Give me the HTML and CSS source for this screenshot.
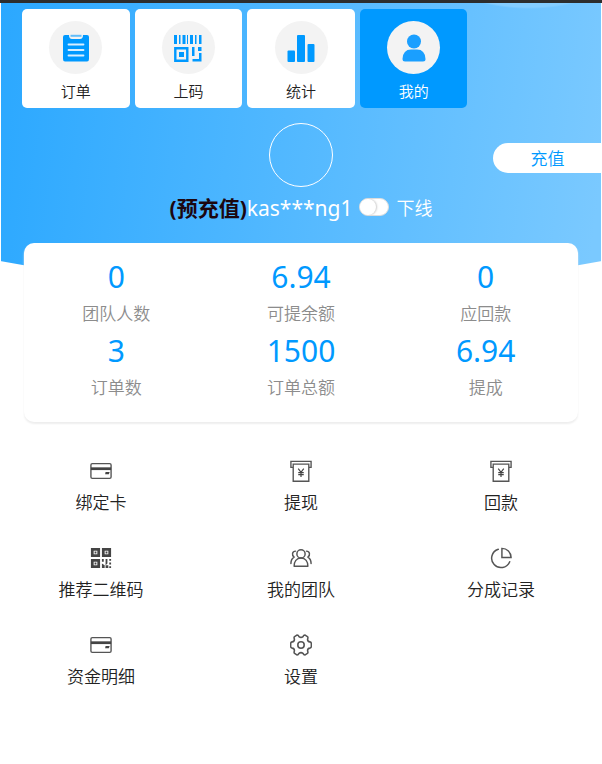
FILE: index.html
```html
<!DOCTYPE html>
<html lang="zh-CN">
<head>
<meta charset="utf-8">
<meta name="viewport" content="width=device-width, initial-scale=1">
<title>我的</title>
<link rel="stylesheet" href="styles.css">
</head>
<body>
<svg class="symbols" aria-hidden="true">
  <symbol id="card" viewBox="0 0 24 24">
    <rect x="1" y="4" width="22" height="16" rx="1.5" fill="none" stroke="#555" stroke-width="1.5"/>
    <path d="M1 8h22v3H1z" fill="#444"/>
    <path d="M17 13.2h4.500l-1 2.300h-4z" fill="#444"/>
  </symbol>
  <symbol id="cash" viewBox="0 0 24 24">
    <path d="M3.500 8H1V1.500h22V8h-2.500M3.500 4.500h17V23.200h-17z" fill="none" stroke="#555" stroke-width="1.500"/>
    <path d="M9 9.500l3 4 3-4M12 13.500V18.500M9 13.700h6M9 16h6" fill="none" stroke="#444" stroke-width="1.300"/>
  </symbol>
  <symbol id="qr" viewBox="0 0 24 24">
    <path d="M2.500 2.500h7v7h-7zM14.500 2.500h7v7h-7zM2.500 14.500h7v7h-7z" fill="none" stroke="#444" stroke-width="3"/>
    <path d="M5 5h2v2H5zM17 5h2v2h-2zM5 17h2v2H5zM13 13h2v3h-2zM17 13h2v5l-2 2zM21 13h2v2h-2zM13 18l3 2v3h-3zM17 20h3v3h-3zM21 17h2v2h-2zM21 21h2v2h-2z" fill="#444"/>
  </symbol>
  <symbol id="team" viewBox="0 0 24 24">
    <g fill="none" stroke="#555" stroke-width="1.600" stroke-linecap="round" stroke-linejoin="round">
      <circle cx="12" cy="7.500" r="4.500"/>
      <path d="M4.500 21c0-5 2.500-9 7.500-9s7.500 4 7.500 9z"/>
      <path d="M6 4.500c-3.500 0-4.500 4.500-1.500 6.500C2 12.500 1 15 1 18M18 4.500c3.500 0 4.500 4.500 1.500 6.500 2.500 1.500 3.500 4 3.500 7"/>
    </g>
  </symbol>
  <symbol id="pie" viewBox="0 0 24 24">
    <path d="M9 2.500A10.200 10.200 0 1 0 21.500 16M13 1.500V11.500h10A10 10 0 0 0 13 1.500z" fill="none" stroke="#555" stroke-width="1.600" stroke-linecap="round"/>
  </symbol>
  <symbol id="gear" viewBox="0 0 24 24">
    <g fill="none" stroke="#555" stroke-width="1.700" stroke-linejoin="round">
      <circle cx="12" cy="12" r="3.500"/>
      <path d="M7.500 1.200Q9 1 9.800 2.800Q12 4.600 14.200 2.800Q15 1 16.500 1.200L19 2.800Q20 3.800 19.200 5.500Q19 8.300 21.600 8.600Q23.300 9 23.300 10.500V13.500Q23.300 15 21.600 15.400Q19 15.700 19.200 18.500Q20 20.200 19 21.200L16.500 22.800Q15 23 14.200 21.200Q12 19.400 9.800 21.200Q9 23 7.500 22.800L5 21.200Q4 20.200 4.800 18.500Q5 15.700 2.400 15.400Q.7 15 .7 13.500V10.500Q.7 9 2.400 8.600Q5 8.300 4.800 5.500Q4 3.800 5 2.800z"/>
    </g>
  </symbol>
</svg>

<div class="page">
  <header class="hero">
    <nav class="tabs">
      <a class="tab" href="#orders">
        <span class="tab-icon"><svg viewBox="0 0 28 28">
          <path d="M3 1h4q0 4 3 4h8q3 0 3-4h4q2 0 2 2v22q0 2.500-2 2.500H3q-2 0-2-2.500V3q0-2 2-2z" fill="#09f"/>
          <path d="M8.500 .8h11v2h-11z" fill="#09f" opacity=".6"/>
          <path d="M6.500 10.500h15M6.500 16h15M6.500 21.500h15" stroke="#d8eeff" stroke-width="1.800" stroke-linecap="round"/>
        </svg></span>
        订单
      </a>
      <a class="tab" href="#codes">
        <span class="tab-icon"><svg viewBox="0 0 28 28">
          <path d="M0 1h3v9H0zM5 1h1.500v9H5zM8.500 1h3v9h-3zM13 1h1v9h-1zM16 1h3v9h-3zM21 1h1.500v9H21zM25 1h2.500v9H25z" fill="#09f"/>
          <path d="M1.300 14.300h12v12.400h-12z" fill="none" stroke="#09f" stroke-width="2.400"/>
          <path d="M5 18h5v5H5zM18 13h2.500v9H18zM24 13h3.500v4H24zM25 19h2.500v8.500h-9V25H25z" fill="#09f"/>
        </svg></span>
        上码
      </a>
      <a class="tab" href="#stats">
        <span class="tab-icon"><svg viewBox="0 0 28 28">
          <rect x="0.500" y="16.500" width="7.500" height="11.500" rx="1" fill="#09f"/>
          <rect x="10" y="1" width="8" height="27" rx="1" fill="#09f"/>
          <rect x="20.500" y="10" width="7" height="18" rx="1" fill="#09f"/>
        </svg></span>
        统计
      </a>
      <a class="tab active" href="#me" aria-current="page">
        <span class="tab-icon"><svg viewBox="0 0 28 28">
          <circle cx="14" cy="7.500" r="7" fill="#1a9fff"/>
          <path d="M2.500 25Q3 15.500 11 15.500h6q8 0 8.500 9.500 0 2.500-2.500 2.500H5q-2.500 0-2.500-2.500z" fill="#1a9fff"/>
        </svg></span>
        我的
      </a>
    </nav>

    <div class="profile">
      <div class="avatar"></div>
      <button class="recharge" type="button">充值</button>
    </div>

    <div class="account">
      <span class="name"><strong>(预充值)</strong>kas***ng1</span>
      <input class="switch" type="checkbox" id="online">
      <label for="online">下线</label>
    </div>
  </header>

  <main>
    <dl class="stats">
      <div class="stat"><dt>团队人数</dt><dd>0</dd></div>
      <div class="stat"><dt>可提余额</dt><dd>6.94</dd></div>
      <div class="stat"><dt>应回款</dt><dd>0</dd></div>
      <div class="stat"><dt>订单数</dt><dd>3</dd></div>
      <div class="stat"><dt>订单总额</dt><dd>1500</dd></div>
      <div class="stat"><dt>提成</dt><dd>6.94</dd></div>
    </dl>

    <nav class="menu">
      <a href="#bind"><svg><use href="#card"/></svg>绑定卡</a>
      <a href="#withdraw"><svg><use href="#cash"/></svg>提现</a>
      <a href="#repay"><svg><use href="#cash"/></svg>回款</a>
      <a href="#invite"><svg><use href="#qr"/></svg>推荐二维码</a>
      <a href="#team-page"><svg><use href="#team"/></svg>我的团队</a>
      <a href="#share"><svg><use href="#pie"/></svg>分成记录</a>
      <a href="#funds"><svg><use href="#card"/></svg>资金明细</a>
      <a href="#settings"><svg><use href="#gear"/></svg>设置</a>
    </nav>
  </main>
</div>
</body>
</html>
```
FILE: styles.css
```css
* {
  box-sizing: border-box;
}

body {
  margin: 0;
  background: #fff;
  color: #222;
  font-family: "Noto Sans", "Noto Sans CJK SC", sans-serif;
  font-weight: 350;
}

a {
  color: inherit;
  text-decoration: none;
}

.symbols {
  display: none;
}

.page {
  border-top: 3px solid #2d2d2d;
}

.hero {
  position: relative;
  padding-top: 6px;
}

/* Curved blue backdrop that runs down behind the stats card */
.hero::before {
  content: "";
  position: absolute;
  z-index: -1;
  inset: 0 1px -60px;
  background:
    radial-gradient(circle 190px at 88% -184px, #84cdff 99%, transparent 100%),
    linear-gradient(97deg, #2ba8ff 0%, #7ac9ff 98%);
  clip-path: ellipse(120% 284px at 50% 0);
}

.tabs {
  display: grid;
  grid-template-columns: repeat(4, 1fr);
  gap: 5px;
  width: 74%;
  margin-left: 22px;
}

.tab {
  display: flex;
  flex-direction: column;
  align-items: center;
  gap: 6px;
  padding: 12px 0 5px;
  border-radius: 5px;
  background: #fff;
  font-size: 15px;
  line-height: 23px;
}

.tab.active {
  background: #09f;
  color: #fff;
}

.tab-icon {
  display: grid;
  place-items: center;
  width: 53px;
  height: 53px;
  border-radius: 50%;
  background: #f3f3f3;
}

.tab-icon svg {
  width: 28px;
  height: 28px;
}

.profile {
  display: grid;
  grid-template-columns: 1fr auto 1fr;
  margin-top: 15px;
}

.avatar {
  grid-column: 2;
  width: 64px;
  height: 64px;
  border: 1px solid #fff;
  border-radius: 50%;
}

.recharge {
  justify-self: end;
  width: 109px;
  height: 30px;
  margin-top: 20px;
  padding: 0 0 2px;
  border: 0;
  border-radius: 15px 0 0 15px;
  background: #fff;
  color: #09f;
  font: inherit;
  font-size: 17px;
}

.account {
  display: flex;
  justify-content: center;
  align-items: center;
  gap: 7px;
  height: 30px;
  margin-top: 5px;
  color: #fff;
  font-size: 18px;
}

.name {
  font-size: 21px;
  font-weight: 400;
}

.name strong {
  color: #1c0710;
  font-weight: 700;
}

.switch {
  appearance: none;
  display: flex;
  width: 30px;
  height: 18px;
  margin: 0;
  border: 1px solid #ddd;
  border-radius: 9px;
  background: #fff;
}

.switch::before {
  content: "";
  width: 16px;
  height: 16px;
  border-radius: 50%;
  background: #fff;
  box-shadow: 1px 0 2px #ccc;
}

.switch:checked::before {
  margin-left: auto;
}

.stats {
  display: grid;
  grid-template-columns: repeat(3, 1fr);
  margin: 21px 24px 0;
  padding: 14px 0 17px;
  border-radius: 10px;
  background: #fff;
  box-shadow: 0 2px 2px #eee;
}

.stat {
  display: flex;
  flex-direction: column-reverse;
  text-align: center;
}

.stat dt {
  color: #8c8c8c;
  font-size: 17px;
  line-height: 34px;
}

.stat dd {
  margin: 0;
  color: #09f;
  font-size: 30px;
  font-weight: 400;
  line-height: 40px;
}

.menu {
  display: grid;
  grid-template-columns: repeat(3, 1fr);
  row-gap: 30px;
  margin: 38px 1px 0;
}

.menu a {
  display: flex;
  flex-direction: column;
  align-items: center;
  gap: 6px;
  font-size: 17px;
  line-height: 29px;
}

.menu svg {
  width: 22px;
  height: 22px;
}
```
